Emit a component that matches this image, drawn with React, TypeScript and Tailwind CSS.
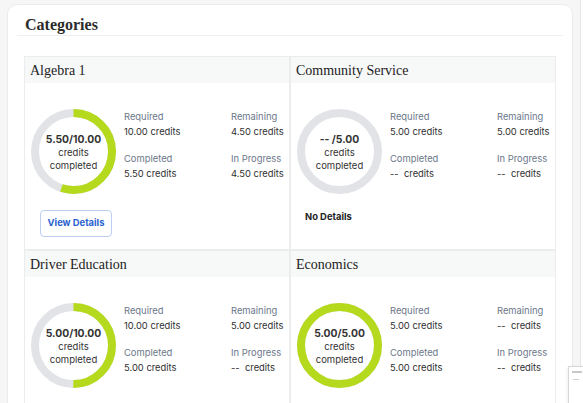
import React from "react";

type Category = {
  name: string;
  earned: string;
  required: string;
  remaining: string;
  completed: string;
  inProgress: string;
  pct: number;
  details: boolean;
};

const categories: Category[] = [
  { name: "Algebra 1", earned: "5.50", required: "10.00", remaining: "4.50", completed: "5.50", inProgress: "4.50", pct: 0.55, details: true },
  { name: "Community Service", earned: "--\u00a0", required: "5.00", remaining: "5.00", completed: "--\u00a0", inProgress: "--\u00a0", pct: 0, details: false },
  { name: "Driver Education", earned: "5.00", required: "10.00", remaining: "5.00", completed: "5.00", inProgress: "--\u00a0", pct: 0.5, details: true },
  { name: "Economics", earned: "5.00", required: "5.00", remaining: "--\u00a0", completed: "5.00", inProgress: "--\u00a0", pct: 1, details: true },
];

const serif = "font-['Liberation_Serif','DejaVu_Serif',serif]";
const sans = "font-['Inter','Noto_Sans',sans-serif]";

function Donut({ pct, earned, required }: { pct: number; earned: string; required: string }) {
  const r = 38.5;
  const c = 2 * Math.PI * r;
  return (
    <div className="relative h-[85px] w-[85px] shrink-0">
      <svg width="85" height="85" viewBox="0 0 85 85" className="absolute inset-0">
        <circle cx="42.5" cy="42.5" r={r} fill="none" stroke="#e2e3e7" strokeWidth="8" />
        {pct > 0 && (
          <circle
            cx="42.5"
            cy="42.5"
            r={r}
            fill="none"
            stroke="#b5d91c"
            strokeWidth="8"
            strokeDasharray={`${c * pct} ${c}`}
            transform="rotate(-90 42.5 42.5)"
          />
        )}
      </svg>
      <div className={`absolute inset-0 flex flex-col items-center justify-center text-[9.5px] leading-[13px] text-[#333] ${sans}`}>
        <span className="font-bold text-[10.3px] leading-[14px]">
          {earned}/{required}
        </span>
        <span>credits</span>
        <span>completed</span>
      </div>
    </div>
  );
}

function Stat({ label, value }: { label: string; value: string }) {
  return (
    <div className="flex flex-col">
      <span className="text-[9.4px] leading-[15px] text-[#6b7789]">{label}</span>
      <span className="text-[9.4px] leading-[15px] text-[#2f2f2f] whitespace-pre">{value} credits</span>
    </div>
  );
}

function CategoryCard({ cat }: { cat: Category }) {
  return (
    <div className="border border-[#ececec] bg-white h-[194px]">
      <div className={`h-[26px] bg-[#f7f8f8] px-[5px] flex items-center text-[14px] text-[#222] ${serif}`}>{cat.name}</div>
      <div className={`${sans} flex`}>
        <div className="ml-[6px] mt-[26px] flex flex-col">
          <Donut pct={cat.pct} earned={cat.earned} required={cat.required} />
          {cat.details ? (
            <button className="mt-[16px] ml-[9px] h-[27px] w-[72px] rounded-[4px] border border-[#bccff2] text-[9.4px] font-bold text-[#2a63cf]">
              View Details
            </button>
          ) : (
            <div className="mt-[16px] ml-[8px] text-[9.4px] font-bold text-[#222]">No Details</div>
          )}
        </div>
        <div className="ml-[8px] mt-[26px] grid grid-cols-[107px_auto] gap-y-[12px] h-fit">
          <Stat label="Required" value={`${cat.required}`} />
          <Stat label="Remaining" value={cat.remaining} />
          <Stat label="Completed" value={cat.completed} />
          <Stat label="In Progress" value={cat.inProgress} />
        </div>
      </div>
    </div>
  );
}

export default function App() {
  return (
    <div className="relative h-[403px] w-[583px] overflow-hidden bg-[#f6f6f6] flex">
      <div className="ml-[7px] mt-[4px] w-[566px] h-[420px] shrink-0 rounded-[10px] border border-[#ebebeb] bg-white px-[9px]">
        <div className={`h-[31px] border-b border-[#f0f0f0] px-[8px] pt-[10px] text-[16px] font-bold leading-[20px] text-[#2b2b2b] ${serif}`}>
          Categories
        </div>
        <div className="mx-[7px] mt-[20px] grid grid-cols-2">
          {categories.map((c) => (
            <CategoryCard key={c.name} cat={c} />
          ))}
        </div>
      </div>
      <div className="ml-[7px] flex-1 border-l border-[#e6e6e6] bg-white" />
      <div className="absolute left-[568px] top-[366px] h-[40px] w-[20px] border border-[#d8d8d8] bg-white shadow">
        <div className="mt-[4px] ml-[3px] h-[2px] w-[10px] bg-[#c8c8c8]" />
        <div className="mt-[6px] ml-[4px] h-[1px] w-[6px] bg-[#d0d0d0]" />
      </div>
    </div>
  );
}
